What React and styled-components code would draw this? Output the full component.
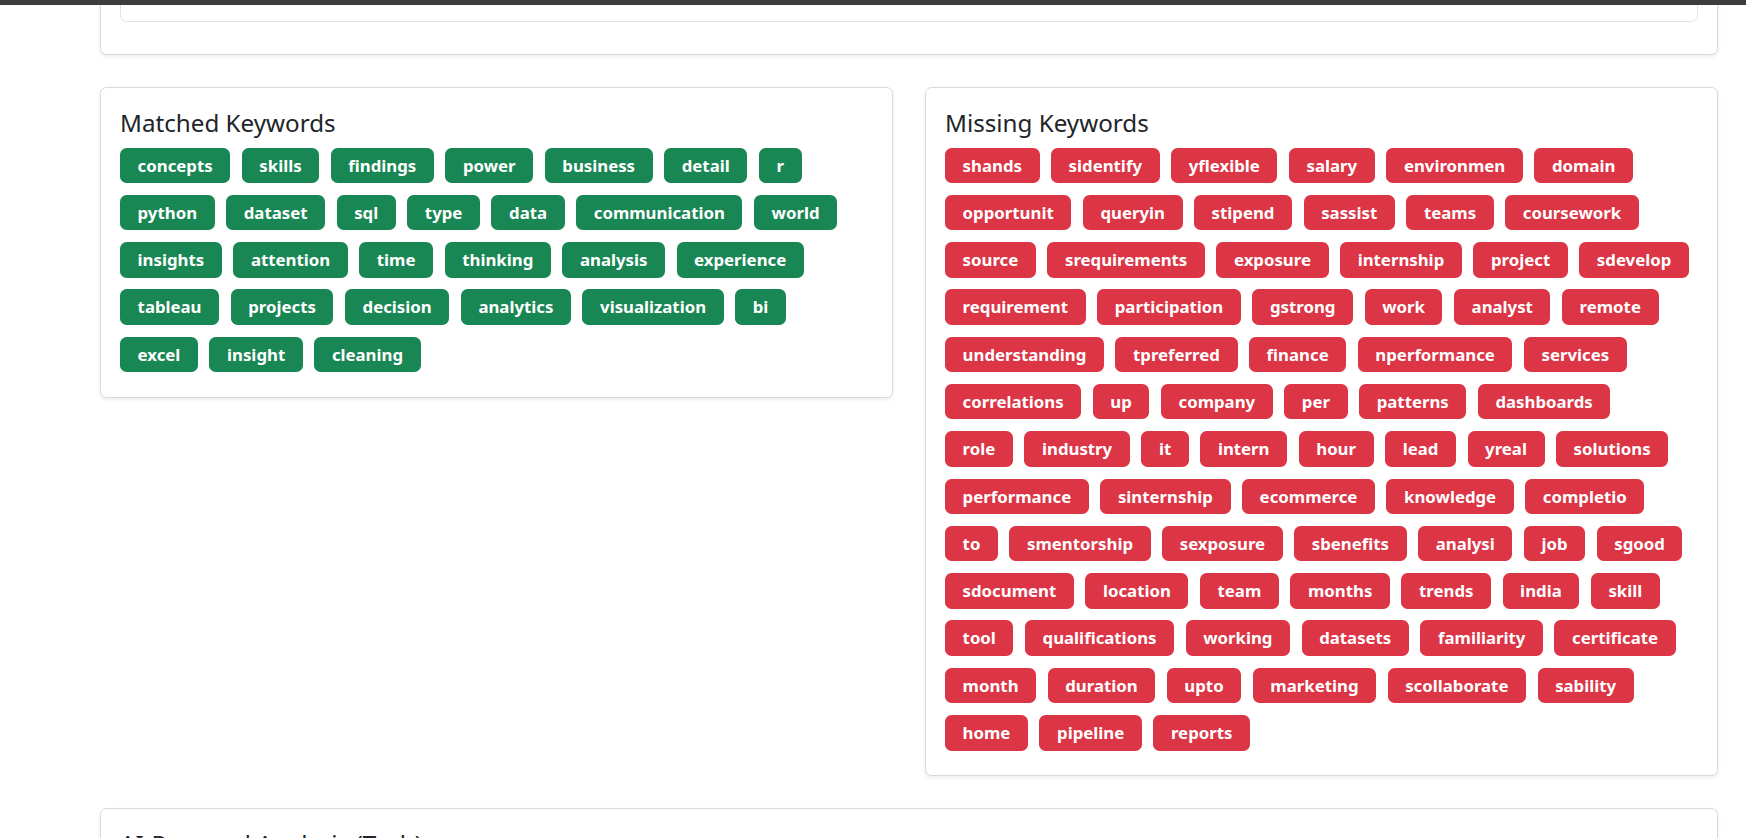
import React from "react";
import styled, { createGlobalStyle } from "styled-components";

const GlobalStyle = createGlobalStyle`
  html, body { margin: 0; padding: 0; background: #ffffff; }
  body {
    font-family: "Noto Sans", "Open Sans", sans-serif;
    color: #212529;
    overflow: hidden;
  }
  * { box-sizing: border-box; }
`;

const TopStrip = styled.div`
  position: fixed;
  top: 0;
  left: 0;
  right: 0;
  height: 5px;
  background: #3c3c3c;
  z-index: 10;
`;

const Page = styled.main`
  padding: 0 28px 0 100px;
  display: flex;
  flex-direction: column;
  gap: 31.5px;
`;

const Card = styled.section`
  background: #fff;
  border: 1px solid #d9d9d9;
  border-radius: 6.6px;
  box-shadow: 0 2px 4px rgba(0, 0, 0, 0.075);
  padding: ${(p) => (p.$compact ? "18px 19px" : "20.5px 19px 24.5px")};
  margin-top: ${(p) => p.$offset || 0}px;
`;

const InnerBox = styled.div`
  height: 120px;
  border: 1px solid #dee2e6;
  border-radius: 6.6px;
  margin-bottom: 14px;
`;

const Columns = styled.div`
  display: grid;
  grid-template-columns: 1fr 1fr;
  gap: 32px;
  align-items: start;
`;

const Title = styled.h4`
  margin: 0 0 9.5px;
  font-size: 24.2px;
  font-weight: 400;
  line-height: 30px;
  color: #212529;
`;

const BadgeList = styled.div`
  display: flex;
  flex-direction: column;
  gap: 11.8px;
`;

const BadgeRow = styled.div`
  display: flex;
  flex-wrap: wrap;
  gap: 11.5px;
`;

const Badge = styled.span`
  display: inline-block;
  padding: 9px 17.6px;
  font-size: 16.8px;
  line-height: 17.5px;
  font-weight: 700;
  color: #fff;
  border-radius: 6.6px;
  white-space: nowrap;
  background: ${(p) => (p.$tone === "danger" ? "#dc3545" : "#198754")};
`;

const matched = [
  ["concepts", "skills", "findings", "power", "business", "detail", "r"],
  ["python", "dataset", "sql", "type", "data", "communication", "world"],
  ["insights", "attention", "time", "thinking", "analysis", "experience"],
  ["tableau", "projects", "decision", "analytics", "visualization", "bi"],
  ["excel", "insight", "cleaning"],
];

const missing = [
  ["shands", "sidentify", "yflexible", "salary", "environmen", "domain"],
  ["opportunit", "queryin", "stipend", "sassist", "teams", "coursework"],
  ["source", "srequirements", "exposure", "internship", "project", "sdevelop"],
  ["requirement", "participation", "gstrong", "work", "analyst", "remote"],
  ["understanding", "tpreferred", "finance", "nperformance", "services"],
  ["correlations", "up", "company", "per", "patterns", "dashboards"],
  ["role", "industry", "it", "intern", "hour", "lead", "yreal", "solutions"],
  ["performance", "sinternship", "ecommerce", "knowledge", "completio"],
  ["to", "smentorship", "sexposure", "sbenefits", "analysi", "job", "sgood"],
  ["sdocument", "location", "team", "months", "trends", "india", "skill"],
  ["tool", "qualifications", "working", "datasets", "familiarity", "certificate"],
  ["month", "duration", "upto", "marketing", "scollaborate", "sability"],
  ["home", "pipeline", "reports"],
];

function KeywordCard({ title, rows, tone }) {
  return (
    <Card>
      <Title>{title}</Title>
      <BadgeList>
        {rows.map((row, r) => (
          <BadgeRow key={r}>
            {row.map((w) => (
              <Badge key={w} $tone={tone}>
                {w}
              </Badge>
            ))}
          </BadgeRow>
        ))}
      </BadgeList>
    </Card>
  );
}

export default function App() {
  return (
    <>
      <GlobalStyle />
      <TopStrip />
      <Page>
        <Card $compact $offset={-117}>
          <InnerBox />
        </Card>
        <Columns>
          <KeywordCard title="Matched Keywords" rows={matched} tone="success" />
          <KeywordCard title="Missing Keywords" rows={missing} tone="danger" />
        </Columns>
        <Card>
          <Title>AI-Powered Analysis (Tech)</Title>
          <InnerBox />
        </Card>
      </Page>
    </>
  );
}
